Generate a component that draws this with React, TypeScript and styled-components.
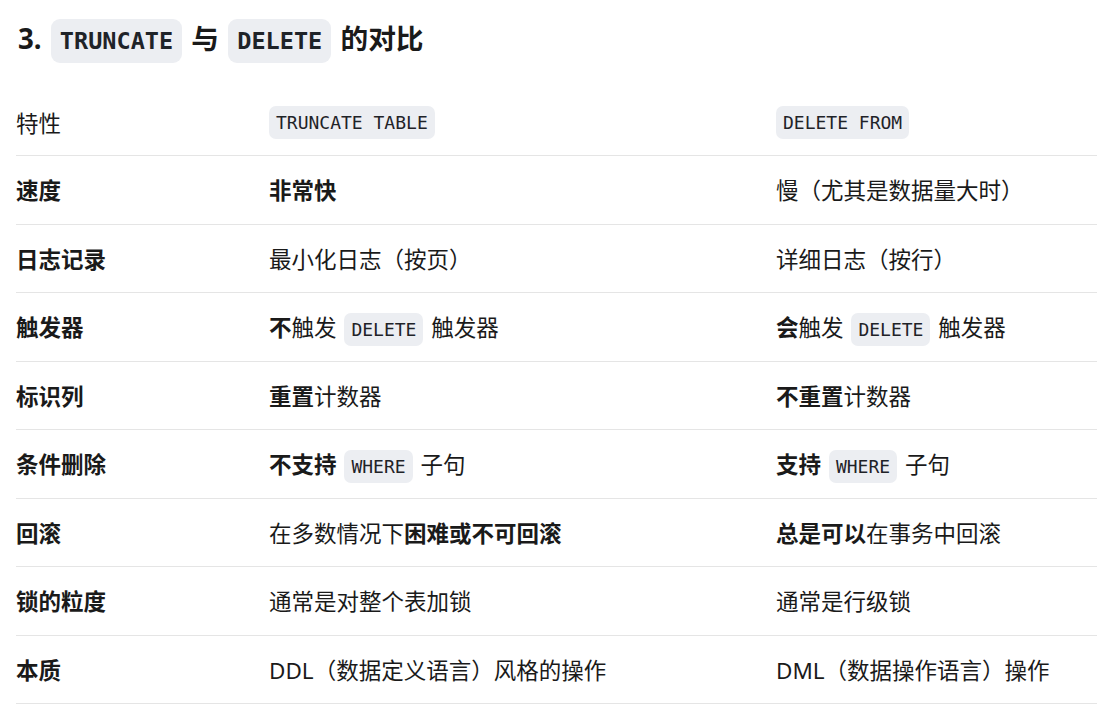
import styled, { createGlobalStyle } from "styled-components";

const GlobalStyle = createGlobalStyle`
  body {
    margin: 0;
    background: #ffffff;
    color: #1a1a1a;
    font-family: "Noto Sans", "Noto Sans CJK SC", sans-serif;
  }
`;

const Page = styled.div`
  padding: 14px 0 0 16px;
`;

const Heading = styled.h3`
  margin: 0 0 24px 2px;
  font-size: 27.7px;
  font-weight: 700;
  line-height: 48px;
  white-space: nowrap;
`;

const Code = styled.code<{ $big?: boolean }>`
  font-family: "DejaVu Sans Mono", "Liberation Mono", monospace;
  font-size: ${(p) => (p.$big ? "0.85em" : "18px")};
  font-weight: ${(p) => (p.$big ? 700 : 400)};
  background: #eceef2;
  color: #1f2328;
  border-radius: ${(p) => (p.$big ? "9px" : "7px")};
  padding: ${(p) => (p.$big ? "8px 9px" : "6px 7px")};
  margin: 0 2px;
`;

// code label in the table header sits flush with the column edge
const HeadCode = styled(Code)`
  margin: 0;
  position: relative;
  top: -2px;
`;

const Table = styled.table`
  width: 100%;
  border-collapse: collapse;
  font-size: 22.5px;
  table-layout: fixed;
`;

const Col = styled.col<{ $w?: number }>`
  width: ${(p) => (p.$w ? `${p.$w}px` : "auto")};
`;

const Cell = styled.td<{ $head?: boolean }>`
  height: 67.5px;
  padding: 0;
  vertical-align: middle;
  border-bottom: 1px solid #e5e5e5;
  font-weight: ${(p) => (p.$head ? 700 : 400)};
  white-space: nowrap;
`;

const HeadCell = styled.th`
  height: 66px;
  padding: 0;
  text-align: left;
  font-weight: 400;
  vertical-align: middle;
  border-bottom: 1px solid #e5e5e5;
`;

const B = styled.strong`
  font-weight: 700;
`;

const rows: [string, React.ReactNode, React.ReactNode][] = [
  ["速度", <B>非常快</B>, "慢（尤其是数据量大时）"],
  ["日志记录", "最小化日志（按页）", "详细日志（按行）"],
  [
    "触发器",
    <>
      <B>不</B>触发 <Code>DELETE</Code> 触发器
    </>,
    <>
      <B>会</B>触发 <Code>DELETE</Code> 触发器
    </>,
  ],
  [
    "标识列",
    <>
      <B>重置</B>计数器
    </>,
    <>
      <B>不重置</B>计数器
    </>,
  ],
  [
    "条件删除",
    <>
      <B>不支持</B> <Code>WHERE</Code> 子句
    </>,
    <>
      <B>支持</B> <Code>WHERE</Code> 子句
    </>,
  ],
  [
    "回滚",
    <>
      在多数情况下<B>困难或不可回滚</B>
    </>,
    <>
      <B>总是可以</B>在事务中回滚
    </>,
  ],
  ["锁的粒度", "通常是对整个表加锁", "通常是行级锁"],
  ["本质", "DDL（数据定义语言）风格的操作", "DML（数据操作语言）操作"],
];

export default function App() {
  return (
    <Page>
      <GlobalStyle />
      <Heading>
        3. <Code $big>TRUNCATE</Code> 与 <Code $big>DELETE</Code> 的对比
      </Heading>
      <Table>
        <colgroup>
          <Col $w={253} />
          <Col $w={507} />
          <Col />
        </colgroup>
        <thead>
          <tr>
            <HeadCell>特性</HeadCell>
            <HeadCell>
              <HeadCode>TRUNCATE TABLE</HeadCode>
            </HeadCell>
            <HeadCell>
              <HeadCode>DELETE FROM</HeadCode>
            </HeadCell>
          </tr>
        </thead>
        <tbody>
          {rows.map(([name, a, b]) => (
            <tr key={name}>
              <Cell $head>{name}</Cell>
              <Cell>{a}</Cell>
              <Cell>{b}</Cell>
            </tr>
          ))}
        </tbody>
      </Table>
    </Page>
  );
}
